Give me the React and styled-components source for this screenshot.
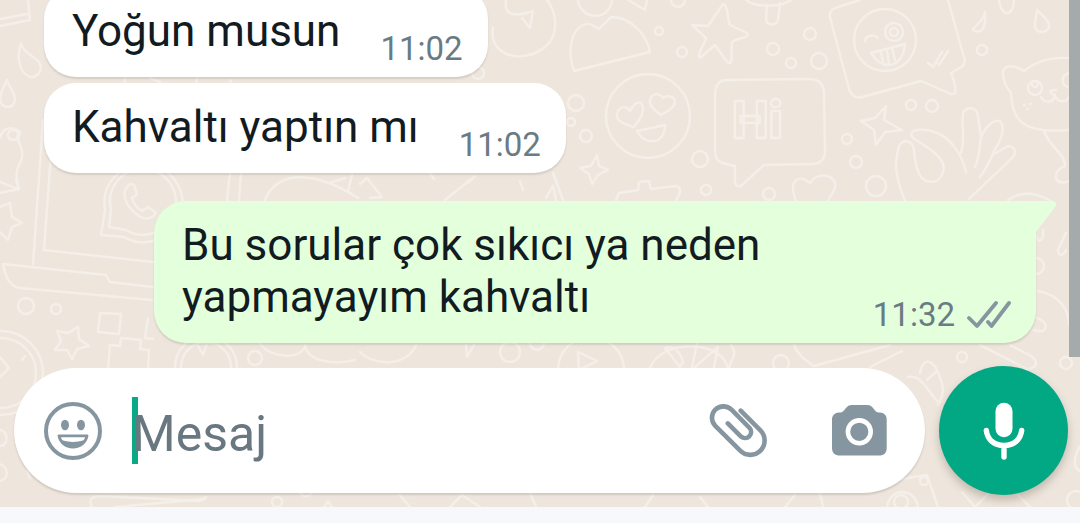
import React from 'react';
import styled, { createGlobalStyle } from 'styled-components';

const GlobalStyle = createGlobalStyle`
    * {
        box-sizing: border-box;
    }
    body {
        margin: 0;
        font-family: Roboto, 'Noto Sans', sans-serif;
        background: #f6f8fb;
    }
`

const Page = styled.div`
    display: flex;
    flex-direction: column;
    min-height: 100vh;
    overflow: hidden;
`

const Chat = styled.main`
    position: relative;
    flex: 1;
    display: flex;
    flex-direction: column;
    justify-content: flex-end;
    background: #eee6dd;
    overflow: hidden;
`

const NavigationBar = styled.div`
    height: 16px;
    background: #f6f8fb;
`

const WallpaperSvg = styled.svg`
    position: absolute;
    top: 0;
    left: 0;
    fill: none;
    stroke: #f5efe9;
    stroke-width: 2.4;
    stroke-linecap: round;
    stroke-linejoin: round;
`

const ScrollThumb = styled.div`
    position: absolute;
    top: 0;
    right: 0;
    width: 11px;
    height: 357px;
    background: #a5abaa;
`

const Messages = styled.div`
    position: relative;
    display: flex;
    flex-direction: column;
    align-items: flex-start;
    gap: 6px;
    margin-top: -13px;
    padding: 0 44px 23px;
`

const Bubble = styled.div`
    position: relative;
    display: flex;
    align-items: flex-end;
    gap: 40px;
    padding: 18px 25px 8px 28px;
    border-radius: ${props => props.$outgoing ? '32px 0 32px 32px' : '32px'};
    background: ${props => props.$outgoing ? '#e4ffdb' : '#ffffff'};
    box-shadow: 0 2px 2px rgba(80, 65, 50, 0.16);
    ${props => props.$outgoing && `
        align-self: stretch;
        margin: 22px 0 0 110px;
    `}
`

const Text = styled.p`
    flex: 1;
    margin: 0;
    padding-bottom: 12px;
    color: #111b21;
    font-size: 44px;
    line-height: 52px;
`

const Meta = styled.div`
    display: flex;
    align-items: center;
    gap: 12px;
    color: #6b7b84;
    font-size: 33px;
    line-height: 40px;
`

const Tail = styled.svg`
    position: absolute;
    top: 0;
    left: 100%;
    fill: #e4ffdb;
`

const Composer = styled.form`
    position: relative;
    display: flex;
    align-items: center;
    gap: 14px;
    padding: 0 12px 12px 14px;
`

const InputPill = styled.div`
    flex: 1;
    min-width: 0;
    display: flex;
    align-items: center;
    height: 125px;
    padding: 0 38px 0 30px;
    border-radius: 63px;
    background: #ffffff;
    box-shadow: 0 2px 2px rgba(80, 65, 50, 0.18);
`

const MessageInput = styled.input`
    flex: 1;
    min-width: 0;
    height: 67px;
    margin: 0 30px;
    padding: 6px 0 0;
    border: 0;
    outline: 0;
    background: transparent;
    box-shadow: inset 6px 0 #0aa884;
    color: #111b21;
    font: 50px Roboto, 'Noto Sans', sans-serif;
    &::placeholder {
        color: #687780;
        opacity: 1;
    }
`

const IconButton = styled.button`
    display: flex;
    margin: 0 0 0 ${props => props.$gap || 0}px;
    padding: 0;
    border: 0;
    background: none;
    color: #8696a0;
`

const MicButton = styled.button`
    display: flex;
    align-items: center;
    justify-content: center;
    width: 129px;
    height: 129px;
    padding: 0;
    border: 0;
    border-radius: 50%;
    background: #02a884;
    color: #ffffff;
    box-shadow: 0 5px 8px rgba(80, 65, 50, 0.28);
`

const Wallpaper = () => {
    return(
        <WallpaperSvg width="1080" height="523" viewBox="0 0 1080 523" aria-hidden="true">
            {/* book, drops and bear on the left */}
            <path d="M0 19 27 14M0 26 30 20 28 0" />
            <path d="M21 43C17 56 18 70 28 76C37 80 44 70 39 62C33 55 23 53 21 43Z" />
            <path d="M7 80C2 90-1 96 1 103C5 109 14 108 15 100C15 92 9 88 7 80Z" />
            <circle cx="13" cy="135" r="5" />
            <path d="M0 137C3 128 12 125 20 132L18 140C22 150 25 155 19 165C14 175 18 180 18 189L0 182" />
            {/* laptop */}
            <path d="M43 120 33 264M53 125 44 250 153 262" />
            <path d="M3 264 106 275 110 282 153 287M3 264C5 276 10 287 20 288L152 300" />
            <path d="M101 235 105 210A39 39 0 1 1 124 237L101 235M109 227 111 210A33 33 0 1 1 126 230L109 227" />
            <path d="M130 184C121 190 124 202 132 210C140 219 150 222 156 213L148 207 142 211C136 207 133 203 132 198L137 194 134 185Z" />
            <path d="M230 173 227 200M241 173 239 200M265 200C270 185 285 177 300 177C320 178 340 186 358 198M330 183 345 178M348 191 352 175" />
            <path d="M0 193 19 189 16 180M0 207 10 203 12 217 22 223 12 227 8 240 0 232" />
            {/* lower left: clock, star, pixels */}
            <circle cx="26" cy="306" r="8" />
            <circle cx="56" cy="309" r="5" />
            <path d="M78 327 79 339 89 346 77 349 72 359 67 350 55 350 61 341 57 331 68 333Z" />
            <circle cx="1" cy="373" r="42" />
            <circle cx="1" cy="373" r="35" />
            <path d="M0 357 9 368 0 377M22 360 25 356" />
            <path d="M100 313 121 314 119 334 98 332ZM121 338 141 340 140 349 149 350 148 370M121 338 120 346 110 345 108 370M148 318 145 338 153 339" />
            <circle cx="206" cy="367" r="31" />
            <circle cx="206" cy="367" r="25" />
            <path d="M196 342 203 355 207 343" />
            <circle cx="255" cy="358" r="7" />
            <path d="M260 344C272 358 298 360 305 347M305 345C307 360 330 366 355 360M360 352C375 367 408 366 416 345M466 345 467 357 474 345" />
            <circle cx="510" cy="352" r="10" />
            <circle cx="537" cy="343" r="7" />
            <circle cx="591" cy="370" r="33" />
            <path d="M578 352 597 361 579 370ZM650 368C660 340 720 338 728 368M680 367 665 348C672 345 680 350 683 362ZM692 367 697 344M695 367 718 347 714 367" />
            {/* behind the gap between bubbles */}
            <circle cx="478" cy="73" r="6" />
            <path d="M125 78V84M150 78 160 82M197 78 196 84M230 80 232 84" />
            <path d="M360 184 367 178 382 197 370 198M430 173 434 179M445 200 475 176 468 183M520 181 523 190M553 173 563 200M546 198 553 186 556 200" />
            {/* smiley, taco, person and star along the top */}
            <path d="M493 28C488 57 525 65 546 46C558 36 558 14 547 0M506 0C503 18 519 16 533 11L530 28 522 18M578 0C580 20 610 22 612 0M628 0 645 10 647 0" />
            <path d="M574 71C565 45 575 22 590 24L599 29 611 17C635 17 648 40 650 52Z" />
            <circle cx="659" cy="31" r="4" />
            <circle cx="682" cy="52" r="5" />
            <circle cx="678" cy="0" r="7" />
            <path d="M692 25 708 26 723 4C728 5 727 16 730 25L747 33C751 38 736 38 732 42C731 57 733 64 728 63L715 45 700 58C696 55 706 42 706 38Z" />
            <path d="M746 0C756 8 782 7 791 0M767 5 766 20C768 26 776 26 778 20L780 3" />
            <circle cx="648" cy="116" r="42" />
            <path d="M634 127C625 124 613 121 618 111C623 104 628 108 630 111C635 101 643 99 643 109C643 118 636 123 634 127Z" />
            <path d="M661 115C654 110 646 103 652 96C657 92 662 96 663 98C669 94 678 98 674 105C671 111 665 112 661 115Z" />
            <path d="M637 131 665 125C665 145 645 146 637 131Z" />
            <circle cx="576" cy="103" r="8" />
            <circle cx="571" cy="122" r="4" />
            <circle cx="586" cy="136" r="6" />
            <circle cx="700" cy="159" r="8" />
            <path d="M597 155 599 166 608 170 598 175 592 184 589 174 580 168 591 166Z" />
            <path d="M616 200 619 193 638 190 639 182 649 181 651 189 675 186C683 187 680 195 676 200" />
            <circle cx="706" cy="190" r="5" />
            {/* greeting bubble */}
            <path d="M727 80 809 79C819 79 824 84 824 94L825 150C825 160 820 164 812 164L764 165 741 186C736 187 735 184 735 181V166L726 164C718 162 715 159 715 150V96C715 86 718 80 727 80Z" />
            <text x="732" y="138" fontSize="52" fontWeight="900" fontFamily="Roboto, sans-serif">Hi</text>
            <circle cx="773" cy="49" r="6" />
            <circle cx="810" cy="34" r="6" />
            <circle cx="791" cy="63" r="5" />
            <circle cx="819" cy="61" r="8" />
            <circle cx="847" cy="139" r="5" />
            <circle cx="856" cy="162" r="6" />
            <circle cx="876" cy="186" r="10" />
            <circle cx="769" cy="194" r="6" />
            <path d="M796 201C789 184 795 177 804 179L810 183C817 171 838 174 835 188L828 201" />
            {/* winking bubble */}
            <path d="M860 0 835 8C829 11 829 16 831 21L848 85C850 95 855 99 862 97L921 81 951 94C957 95 957 89 951 73L963 66C966 62 965 58 963 54L948 0" />
            <circle cx="885" cy="40" r="31" />
            <circle cx="894" cy="32" r="9" />
            <circle cx="894" cy="32" r="4" />
            <path d="M865 41C866 35 874 34 878 38M871 53 905 44C904 58 896 65 889 65C882 65 876 61 871 53ZM881 52 883 61M892 48 895 60M887 51 889 64M928 63 933 67 942 52M937 63 939 65 948 51" />
            <circle cx="911" cy="105" r="5" />
            <circle cx="932" cy="106" r="6" />
            <path d="M886 106 884 120 902 130 885 132 876 145 874 130 861 121 875 118Z" />
            <path d="M985 12C985 20 973 27 973 30C981 34 986 30 985 12ZM1037 10C1035 24 1032 30 1041 32C1050 32 1051 24 1046 19ZM999 0C1001 18 1014 17 1014 0" />
            <circle cx="982" cy="50" r="5" />
            {/* hand */}
            <path d="M906 203C892 170 896 158 899 146C904 138 913 141 914 150C916 180 925 182 933 182C942 180 945 170 943 163C935 150 923 145 913 138C906 128 925 128 937 133C948 137 961 151 966 172M961 153C966 136 960 118 964 111C970 106 977 108 978 116L981 137C979 150 980 156 975 167M981 138C985 126 995 119 1000 121C1006 128 1001 140 994 151C990 162 985 170 980 177M994 154 1008 146C1017 147 1017 154 1010 160L969 199" />
            {/* bear */}
            <path d="M1069 58C1050 57 1035 62 1024 71C1015 65 1003 64 1003 73C1003 86 1010 90 1011 93C1012 120 1022 134 1069 130M1044 131C1050 148 1065 153 1065 166C1060 168 1055 171 1056 178C1058 184 1065 183 1069 181" />
            <circle cx="1035" cy="88" r="7" />
            <circle cx="1035" cy="84" r="3" />
            <path d="M1069 73C1060 76 1061 85 1068 87M1041 97C1045 104 1054 103 1055 95C1048 93 1049 90 1056 90M1055 96C1058 103 1067 103 1069 96M1024 105H1025M1030 104H1031M1027 109H1028" />
            {/* right margin around the reply */}
            <path d="M1008 200C1022 190 1039 193 1052 202M1043 230C1044 243 1037 243 1036 235M1066 233 1058 250C1058 256 1063 257 1066 250M1038 291C1060 295 1069 310 1069 325M1037 318C1050 322 1048 335 1034 330" />
            <circle cx="1036" cy="266" r="8" />
            {/* between reply and composer */}
            <path d="M731 345C740 357 727 361 730 369M794 345C798 355 804 359 814 366L890 345M870 367 902 351" />
            <circle cx="781" cy="363" r="8" />
            <circle cx="962" cy="357" r="5" />
            <circle cx="1066" cy="363" r="6" />
            <path d="M908 377C920 374 925 387 937 401M920 373C923 355 935 360 940 378C945 388 943 396 938 405M980 345 1027 369C1038 368 1038 361 1031 356L1010 345M927 380 937 371" />
            {/* around and under the composer */}
            <path d="M0 430C8 430 9 446 0 446M0 464C10 468 8 480 0 481M27 470 30 478M1080 446C1070 464 1077 470 1080 471" />
            <path d="M92 507C88 500 92 496 100 496L200 501 206 497M115 507 205 499M300 493C306 500 312 493 312 493M324 507 328 501 332 507M400 495 410 507M450 507 462 495 480 507M530 493 536 507M645 507 653 495M700 497 708 507M785 507 795 495M820 493 823 507M887 507C890 487 915 487 918 507M938 507 927 475 895 480M962 492 975 507 990 492M1016 493 1030 507" />
            <circle cx="277" cy="502" r="5" />
            <circle cx="901" cy="502" r="7" />
            <circle cx="924" cy="481" r="4" />
            <circle cx="1076" cy="500" r="9" />
        </WallpaperSvg>
    );
};

const Checks = () => (
    <svg width="44" height="28" viewBox="0 0 44 28" fill="none" stroke="#8696a0" strokeWidth="3.8" strokeLinecap="round" strokeLinejoin="round" role="img" aria-label="İletildi">
        <path d="M2 17 10 25 29 2M21 21 24.5 25 42 2" />
    </svg>
);

const SmileIcon = () => (
    <svg width="58" height="58" viewBox="0 0 58 58" fill="currentColor">
        <circle cx="29" cy="29" r="27" fill="none" stroke="currentColor" strokeWidth="4" />
        <ellipse cx="21" cy="23" rx="4" ry="5.2" />
        <ellipse cx="37" cy="23" rx="4" ry="5.2" />
        <path d="M15 32.5H43C44 32.5 44.6 33 44.4 34C43 41.5 37 46.5 29 46.5S15 41.5 13.6 34C13.4 33 14 32.5 15 32.5Z" />
        <path d="M17 35.3H41C40.5 37 40 38 39 38.6C33 40.4 25 40.4 19 38.6C18 38 17.5 37 17 35.3Z" fill="#fff" />
    </svg>
);

const ClipIcon = () => (
    <svg width="58" height="52" viewBox="0 0 58 52" fill="none" stroke="currentColor" strokeWidth="4.6" strokeLinecap="round" overflow="visible">
        <path d="M30.7 5.7 50.4 25.4A14.3 14.3 0 0 1 30.2 45.7L5.3 20.9A11.4 11.4 0 0 1 21.5 4.7L39.6 23A6.1 6.1 0 0 1 31 31.6L17.8 18.4" />
    </svg>
);

const CameraIcon = () => (
    <svg width="55" height="51" viewBox="0 0 55 51" fill="currentColor">
        <path d="M7 7.5C11 7.5 11.5 6 13.5 3.5C15.5 1 17 0 20 0H35C38 0 39.5 1 41.5 3.5C43.5 6 44 7.5 48 7.5C52 7.5 54.7 10.5 54.7 14.5V43C54.7 48 52 50.6 47 50.6H8C3 50.6 0 48 0 43V14.5C0 10.5 3 7.5 7 7.5Z" />
        <circle cx="27.3" cy="26.8" r="11.4" fill="none" stroke="#fff" strokeWidth="4.6" />
    </svg>
);

const MicIcon = () => (
    <svg width="42" height="58" viewBox="0 0 42 58" fill="none" stroke="currentColor" strokeWidth="5.4" strokeLinecap="round">
        <rect x="12.5" y="0.7" width="17" height="34.6" rx="8.5" fill="currentColor" stroke="none" />
        <path d="M3.3 28.5C4.4 37.5 11 43.5 21 43.5S37.6 37.5 38.7 28.5M21 44V55" />
    </svg>
);

const Message = (props) => {
    return(
        <Bubble $outgoing={props.outgoing}>
            <Text>{props.text}</Text>
            <Meta>
                <time>{props.time}</time>
                {props.outgoing && <Checks />}
            </Meta>
            {props.outgoing &&
                <Tail width="20" height="32" viewBox="0 0 20 32" aria-hidden="true">
                    <path d="M0 0H16C20 0 21 3 19 6L0 31Z" />
                </Tail>
            }
        </Bubble>
    );
};

const App = () => {
    return(
        <Page>
            <GlobalStyle />
            <Chat>
                <Wallpaper />
                <ScrollThumb />
                <Messages>
                    <Message text="Yoğun musun" time="11:02" />
                    <Message text="Kahvaltı yaptın mı" time="11:02" />
                    <Message outgoing text="Bu sorular çok sıkıcı ya neden yapmayayım kahvaltı" time="11:32" />
                </Messages>
                <Composer onSubmit={(e) => e.preventDefault()}>
                    <InputPill>
                        <IconButton type="button" aria-label="Emoji"><SmileIcon /></IconButton>
                        <MessageInput type="text" placeholder="Mesaj" aria-label="Mesaj" />
                        <IconButton type="button" aria-label="Dosya ekle"><ClipIcon /></IconButton>
                        <IconButton type="button" aria-label="Kamera" $gap={64}><CameraIcon /></IconButton>
                    </InputPill>
                    <MicButton type="button" aria-label="Sesli mesaj"><MicIcon /></MicButton>
                </Composer>
            </Chat>
            <NavigationBar />
        </Page>
    );
};

export default App;
